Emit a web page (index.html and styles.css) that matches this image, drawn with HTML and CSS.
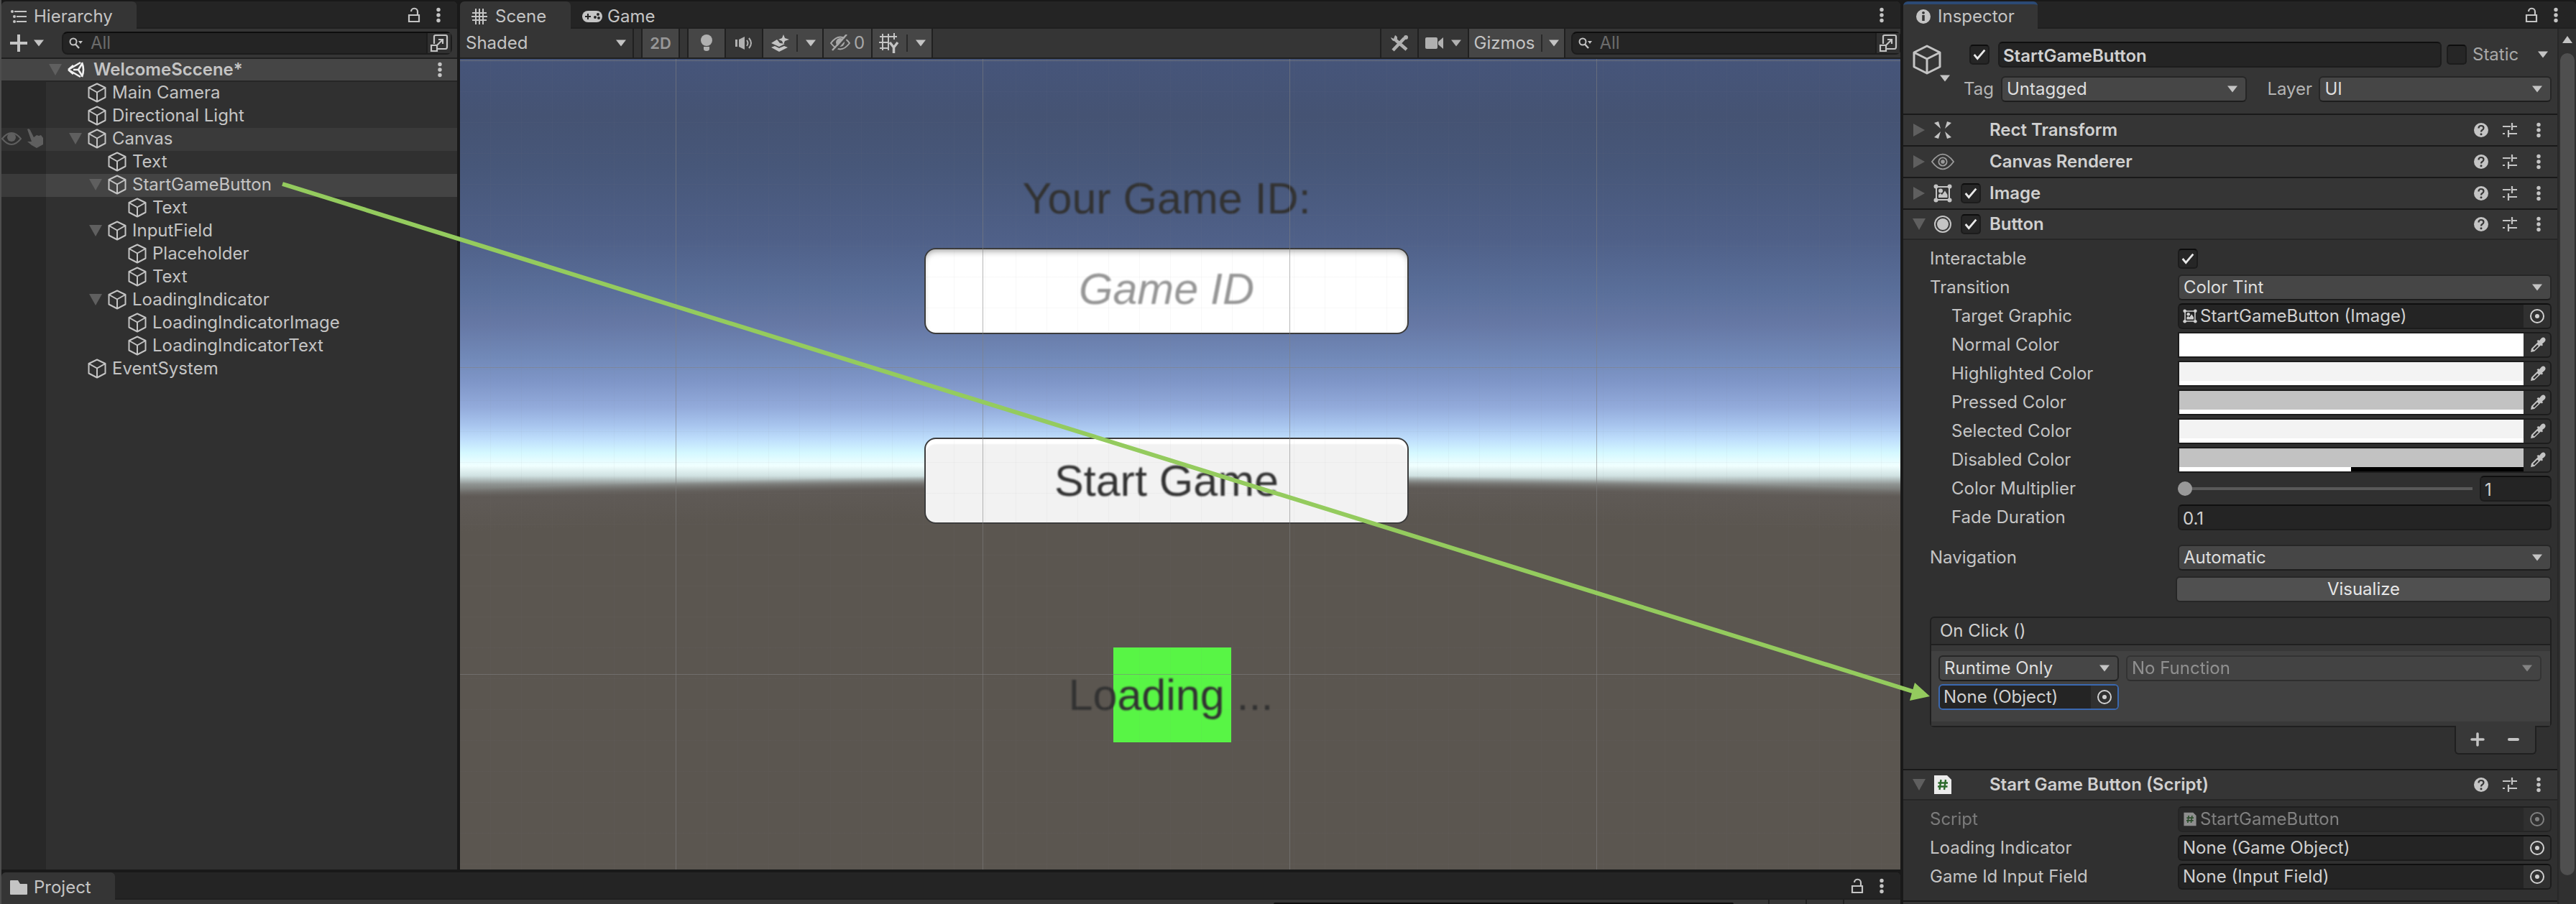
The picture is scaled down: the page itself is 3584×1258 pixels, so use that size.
FILE: index.html
```html
<!DOCTYPE html>
<html lang="en">
<head>
<meta charset="utf-8">
<title>WelcomeSccene - Editor</title>
<link rel="stylesheet" href="styles.css">
</head>
<body>
<svg class="defs" aria-hidden="true">
  <symbol id="cube" viewBox="0 0 26 28"><path d="M13 1.500 L24.500 7 V20.500 L13 26.500 L1.500 20.500 V7 Z M1.500 7 L13 13.500 L24.500 7 M13 13.500 V26.500" fill="none" stroke="currentColor" stroke-width="2" stroke-linejoin="round"/></symbol>
  <symbol id="bigcube" viewBox="0 0 40 42"><path d="M20 2 L38 11 V31 L20 40 L2 31 V11 Z M2 11 L20 20 L38 11 M20 20 V40" fill="none" stroke="currentColor" stroke-width="3" stroke-linejoin="round"/></symbol>
  <symbol id="down" viewBox="0 0 16 10"><path d="M1 0.500 H15 L8 9.500 Z" fill="currentColor"/></symbol>
  <symbol id="fold" viewBox="0 0 18 16"><path d="M0 0 H18 L9 16 Z" fill="currentColor"/></symbol>
  <symbol id="right" viewBox="0 0 16 18"><path d="M0 0 V18 L16 9 Z" fill="currentColor"/></symbol>
  <symbol id="dots" viewBox="0 0 6 22"><circle cx="3" cy="3.500" r="2.700" fill="currentColor"/><circle cx="3" cy="11" r="2.700" fill="currentColor"/><circle cx="3" cy="18.500" r="2.700" fill="currentColor"/></symbol>
  <symbol id="lock" viewBox="0 0 18 22"><path d="M2 11 H16 V20 H2 Z M14 11 V6.500 A4.500 4.500 0 0 0 5 6" fill="none" stroke="currentColor" stroke-width="2.200"/></symbol>
  <symbol id="find" viewBox="0 0 20 16"><circle cx="6" cy="6" r="4.500" fill="none" stroke="currentColor" stroke-width="2"/><path d="M9 9.500 L14 15" stroke="currentColor" stroke-width="2.400"/><path d="M13 5 H19 L16 9 Z" fill="currentColor"/></symbol>
  <symbol id="popout" viewBox="0 0 26 26"><path d="M6 14 V4 Q6 2 8 2 H22 Q24 2 24 4 V18 Q24 21 22 21 H11 M2 16 H10 V24 H2 Z M10 16 L18 8 M12 8 H18 V14" fill="none" stroke="currentColor" stroke-width="2.200"/></symbol>
  <symbol id="help" viewBox="0 0 22 22"><circle cx="11" cy="11" r="10" fill="currentColor"/><path d="M7.500 8.500 Q7.500 5 11 5 Q14.500 5 14.500 8 Q14.500 10 12.500 11 Q11 12 11 13.500" fill="none" stroke="#353535" stroke-width="2.200"/><circle cx="11" cy="16.800" r="1.500" fill="#353535"/></symbol>
  <symbol id="preset" viewBox="0 0 22 22"><path d="M1 6 H12 M14 1 V11 M14 6 H21 M1 16 H4 M9 11 V21 M9 16 H21" stroke="currentColor" stroke-width="2.200" fill="none"/></symbol>
  <symbol id="target" viewBox="0 0 22 22"><circle cx="11" cy="11" r="9" fill="none" stroke="currentColor" stroke-width="2"/><circle cx="11" cy="11" r="3" fill="currentColor"/></symbol>
  <symbol id="picker" viewBox="0 0 22 22"><path d="M1 21 L2 16 L11 7 L9.500 5.500 L11.500 4 L13 5 L16 1.500 Q19 -0.500 21 2 Q22.500 4.500 20 7 L17 9.500 L18 11 L16.500 12.500 L15 11.500 L6 20 Z" fill="currentColor"/><path d="M5 17.500 L11 11.500" stroke="#2a2a2a" stroke-width="2.400"/></symbol>
  <symbol id="image" viewBox="0 0 26 26"><path d="M4 4 H22 V22 H4 Z" fill="none" stroke="currentColor" stroke-width="2"/><g fill="currentColor"><circle cx="3.500" cy="3.500" r="3"/><circle cx="22.500" cy="3.500" r="3"/><circle cx="3.500" cy="22.500" r="3"/><circle cx="22.500" cy="22.500" r="3"/><circle cx="10" cy="9.500" r="3"/><path d="M7 19 V15 L9.500 13 L12 15 L16 9.500 L19.500 15 V19 Z"/></g></symbol>
  <symbol id="script" viewBox="0 0 26 28"><path d="M1 1 H19 L25 7 V27 H1 Z" fill="#ececec"/><path d="M10.500 7 L8.500 21 M17 7 L15 21 M6.500 11.500 H20 M6 16.500 H19.500" stroke="#2c6a2c" stroke-width="2.400" fill="none"/></symbol>
</svg>

<section class="panel hierarchy" aria-label="Hierarchy">
  <header class="tabs">
    <h2 class="tab tab-hier"><svg width="22" height="18" viewBox="0 0 22 18"><path d="M5 2 H22 M8 9 H22 M8 16 H22" stroke="currentColor" stroke-width="2.200"/><circle cx="2" cy="2" r="2" fill="currentColor"/><circle cx="5" cy="9" r="2" fill="currentColor"/><circle cx="5" cy="16" r="2" fill="currentColor"/></svg>Hierarchy</h2>
    <span class="tab-tools"><svg width="18" height="22"><use href="#lock"/></svg><svg width="6" height="22"><use href="#dots"/></svg></span>
  </header>
  <div class="toolbar hier-bar">
    <button class="plain add" aria-label="Create"><svg width="24" height="24" viewBox="0 0 24 24"><path d="M12 0 V24 M0 12 H24" stroke="currentColor" stroke-width="4"/></svg><svg width="16" height="10"><use href="#down"/></svg></button>
    <label class="search"><svg width="20" height="16"><use href="#find"/></svg><input type="text" placeholder="All" aria-label="Search hierarchy"><span class="pop"><svg width="26" height="26"><use href="#popout"/></svg></span></label>
  </div>
  <div class="scene-row"><svg class="fold" width="18" height="16"><use href="#fold"/></svg><svg class="white" width="24" height="24" viewBox="0 0 24 24"><path d="M1 12 L18 2 M1 12 L18 22 M8 12 H15 M15 12 L20 4 M15 12 L20 20 M20 2 Q24 12 20 22 M1 12 L8 6 M1 12 L8 18" stroke="currentColor" stroke-width="2.600" fill="none"/></svg><strong>WelcomeSccene*</strong><svg class="end" width="6" height="22"><use href="#dots"/></svg></div>
  <ul class="tree">
    <li class="l1"><svg width="26" height="28"><use href="#cube"/></svg>Main Camera</li>
    <li class="l1"><svg width="26" height="28"><use href="#cube"/></svg>Directional Light</li>
    <li class="l1 hover"><span class="gutter"><svg width="28" height="20" viewBox="0 0 28 20"><path d="M1 10 Q14 -6 27 10 Q14 26 1 10 Z" fill="none" stroke="currentColor" stroke-width="2"/><circle cx="14" cy="8" r="6" fill="currentColor"/></svg><svg width="24" height="28" viewBox="0 0 24 28"><path d="M1 1 Q3 -1 5 2 L10 12 L14 9 L17 10 L20 9 L23 13 V22 L14 27 L7 23 L1 18 L7 18 Z" fill="currentColor"/></svg></span><svg class="fold" width="18" height="16"><use href="#fold"/></svg><svg width="26" height="28"><use href="#cube"/></svg>Canvas</li>
    <li class="l2"><svg width="26" height="28"><use href="#cube"/></svg>Text</li>
    <li class="l2 selected"><svg class="fold" width="18" height="16"><use href="#fold"/></svg><svg width="26" height="28"><use href="#cube"/></svg>StartGameButton</li>
    <li class="l3"><svg width="26" height="28"><use href="#cube"/></svg>Text</li>
    <li class="l2"><svg class="fold" width="18" height="16"><use href="#fold"/></svg><svg width="26" height="28"><use href="#cube"/></svg>InputField</li>
    <li class="l3"><svg width="26" height="28"><use href="#cube"/></svg>Placeholder</li>
    <li class="l3"><svg width="26" height="28"><use href="#cube"/></svg>Text</li>
    <li class="l2"><svg class="fold" width="18" height="16"><use href="#fold"/></svg><svg width="26" height="28"><use href="#cube"/></svg>LoadingIndicator</li>
    <li class="l3"><svg width="26" height="28"><use href="#cube"/></svg>LoadingIndicatorImage</li>
    <li class="l3"><svg width="26" height="28"><use href="#cube"/></svg>LoadingIndicatorText</li>
    <li class="l1"><svg width="26" height="28"><use href="#cube"/></svg>EventSystem</li>
  </ul>
</section>

<main class="panel scene">
  <header class="tabs">
    <h2 class="tab tab-scene"><svg width="22" height="22" viewBox="0 0 22 22"><path d="M6 0 V22 M11 0 V22 M16 0 V22 M1 6 H21 M0 11 H22 M1 16 H21" stroke="currentColor" stroke-width="2"/></svg>Scene</h2>
    <h2 class="tab idle"><svg width="28" height="16" viewBox="0 0 28 16"><rect width="28" height="16" rx="8" fill="currentColor"/><path d="M8 4 V12 M4 8 H12" stroke="#242424" stroke-width="2"/><circle cx="18" cy="9" r="2" fill="#242424"/><circle cx="22" cy="5" r="2" fill="#242424"/><circle cx="23" cy="10" r="2" fill="#242424"/></svg>Game</h2>
    <span class="tab-tools"><svg width="6" height="22"><use href="#dots"/></svg></span>
  </header>
  <div class="toolbar scene-bar">
    <button class="cell shading">Shaded<svg width="16" height="10"><use href="#down"/></svg></button>
    <span class="cell spacer"></span>
    <button class="cell on two-d">2D</button>
    <span class="cell spacer"></span>
    <button class="cell on icon" aria-label="Lighting"><svg width="16" height="24" viewBox="0 0 16 24"><circle cx="8" cy="8" r="8" fill="currentColor"/><path d="M4 17 H12 V20 Q12 23 8 23 Q4 23 4 20 Z" fill="currentColor"/></svg></button>
    <button class="cell icon" aria-label="Audio"><svg width="26" height="20" viewBox="0 0 26 20"><path d="M1 5 H4 V15 H1 Z M6 5 L14 1 V19 L6 15 Z" fill="currentColor"/><path d="M17 6 Q20 10 17 14 M20 3 Q26 10 20 17" fill="none" stroke="currentColor" stroke-width="2"/></svg></button>
    <button class="cell on wide" aria-label="Effects"><svg width="26" height="24" viewBox="0 0 26 24"><path d="M18 0 L20 5 L26 7 L20 9 L18 14 L16 9 L11 7 L16 5 Z M1 12 L9 7 L13 12 L20 13 L12 17 Z M1 18 L6 16 L12 19 L19 16 L24 18 L12 24 Z" fill="currentColor"/></svg><i></i><svg width="16" height="10"><use href="#down"/></svg></button>
    <button class="cell on hidden-count" aria-label="Hidden objects"><svg width="28" height="24" viewBox="0 0 28 24"><path d="M1 12 Q14 -5 27 12 Q14 29 1 12 Z" fill="none" stroke="currentColor" stroke-width="2"/><circle cx="14" cy="11" r="6" fill="currentColor"/><path d="M5 24 L25 2" stroke="#464646" stroke-width="3"/><path d="M3 22 L23 0" stroke="currentColor" stroke-width="2.500"/></svg>0</button>
    <button class="cell on wide" aria-label="Grid"><svg width="28" height="28" viewBox="0 0 28 28"><path d="M5 1 V24 M13 1 V24 M21 0 V9 M1 5 H25 M0 13 H14 M1 21 H13" stroke="currentColor" stroke-width="2"/><path d="M15 13 L20.500 20 L26 13 M20.500 20 V28" stroke="currentColor" stroke-width="3.500" fill="none"/></svg><i></i><svg width="16" height="10"><use href="#down"/></svg></button>
    <span class="cell grow"></span>
    <button class="cell icon" aria-label="Tools"><svg width="26" height="24" viewBox="0 0 26 24"><path d="M8 8 L23 21 M20 5 L4 22" stroke="currentColor" stroke-width="4.500"/><path d="M1 4 L5 6 L7 1 Q12 3 9 9 Q3 11 1 4 Z" fill="currentColor"/><circle cx="22" cy="4" r="3" fill="currentColor"/></svg></button>
    <button class="cell cam" aria-label="Camera"><svg width="26" height="16" viewBox="0 0 26 16"><rect width="17" height="16" rx="2" fill="currentColor"/><path d="M18 6 L25 0 V16 L18 10 Z" fill="currentColor"/></svg><svg width="16" height="10"><use href="#down"/></svg></button>
    <button class="cell on gizmos">Gizmos<i></i><svg width="16" height="10"><use href="#down"/></svg></button>
    <div class="cell search-cell"><label class="search"><svg width="20" height="16"><use href="#find"/></svg><input type="text" placeholder="All" aria-label="Search scene"><span class="pop"><svg width="26" height="26"><use href="#popout"/></svg></span></label></div>
  </div>
  <div class="viewport">
    <div class="ground"></div>
    <label class="ui game-label" for="gid">Your Game ID:</label>
    <input class="ui game-input" id="gid" type="text" placeholder="Game ID">
    <button class="ui game-start"><span>Start Game</span></button>
    <div class="ui game-square"></div>
    <p class="ui game-loading">Loading ...</p>
    <div class="lines"></div>
  </div>
</main>

<aside class="panel inspector" aria-label="Inspector">
  <header class="tabs">
    <h2 class="tab tab-insp"><svg width="20" height="20" viewBox="0 0 20 20"><circle cx="10" cy="10" r="10" fill="currentColor"/><path d="M10 8 V16" stroke="#353535" stroke-width="3.500"/><circle cx="10" cy="4.800" r="1.900" fill="#353535"/></svg>Inspector</h2>
    <span class="tab-tools"><svg width="18" height="22"><use href="#lock"/></svg><svg width="6" height="22"><use href="#dots"/></svg></span>
  </header>
  <div class="insp-body">
    <div class="insp-content">
      <div class="object">
        <span class="object-icon"><svg width="40" height="42"><use href="#bigcube"/></svg><svg width="16" height="10"><use href="#down"/></svg></span>
        <div class="object-fields">
          <div class="object-row">
            <input type="checkbox" checked aria-label="Active">
            <input class="field name" type="text" value="StartGameButton" aria-label="Name">
            <label class="static"><input type="checkbox">Static</label>
            <svg class="static-caret" width="16" height="10"><use href="#down"/></svg>
          </div>
          <div class="object-row second">
            <label for="tag">Tag</label>
            <span class="select tag"><select id="tag"><option>Untagged</option></select><svg width="16" height="10"><use href="#down"/></svg></span>
            <label class="layer-label" for="layer">Layer</label>
            <span class="select layer"><select id="layer"><option>UI</option></select><svg width="16" height="10"><use href="#down"/></svg></span>
          </div>
        </div>
      </div>

      <div class="comp"><svg class="fold" width="16" height="18"><use href="#right"/></svg><svg width="26" height="24" viewBox="0 0 26 24"><path d="M1 2 L7 0 L10 10 Z M25 2 L19 0 L16 10 Z M1 22 L7 24 L10 14 Z M25 22 L19 24 L16 14 Z" fill="currentColor"/></svg><span></span><h3>Rect Transform</h3><svg width="22" height="22"><use href="#help"/></svg><svg width="22" height="22"><use href="#preset"/></svg><svg width="6" height="22"><use href="#dots"/></svg></div>
      <div class="comp"><svg class="fold" width="16" height="18"><use href="#right"/></svg><svg class="eye" width="32" height="24" viewBox="0 0 34 24"><path d="M1 12 Q9 1 17 1 Q25 1 33 12 Q25 23 17 23 Q9 23 1 12 Z" fill="none" stroke="currentColor" stroke-width="2"/><circle cx="17" cy="12" r="6" fill="none" stroke="currentColor" stroke-width="2"/><circle cx="17" cy="12" r="3" fill="currentColor"/></svg><span></span><h3>Canvas Renderer</h3><svg width="22" height="22"><use href="#help"/></svg><svg width="22" height="22"><use href="#preset"/></svg><svg width="6" height="22"><use href="#dots"/></svg></div>
      <div class="comp"><svg class="fold" width="16" height="18"><use href="#right"/></svg><svg width="26" height="26"><use href="#image"/></svg><input type="checkbox" checked aria-label="Image enabled"><h3>Image</h3><svg width="22" height="22"><use href="#help"/></svg><svg width="22" height="22"><use href="#preset"/></svg><svg width="6" height="22"><use href="#dots"/></svg></div>
      <div class="comp open"><svg class="fold" width="18" height="16"><use href="#fold"/></svg><svg width="26" height="24" viewBox="0 0 26 24"><circle cx="13" cy="12" r="11" fill="none" stroke="currentColor" stroke-width="2"/><circle cx="13" cy="12" r="8" fill="currentColor"/></svg><input type="checkbox" checked aria-label="Button enabled"><h3>Button</h3><svg width="22" height="22"><use href="#help"/></svg><svg width="22" height="22"><use href="#preset"/></svg><svg width="6" height="22"><use href="#dots"/></svg></div>

      <div class="props">
        <div class="prop"><label for="inter">Interactable</label><input id="inter" type="checkbox" checked></div>
        <div class="prop"><label for="trans">Transition</label><span class="select"><select id="trans"><option>Color Tint</option></select><svg width="16" height="10"><use href="#down"/></svg></span></div>
        <div class="prop sub"><span>Target Graphic</span><button class="field object-field"><svg width="20" height="20"><use href="#image"/></svg>StartGameButton (Image)<b><svg width="22" height="22"><use href="#target"/></svg></b></button></div>
        <div class="prop sub"><span>Normal Color</span><button class="swatch" aria-label="Normal Color"><span class="normal"></span><svg width="22" height="22"><use href="#picker"/></svg></button></div>
        <div class="prop sub"><span>Highlighted Color</span><button class="swatch" aria-label="Highlighted Color"><span class="light"></span><svg width="22" height="22"><use href="#picker"/></svg></button></div>
        <div class="prop sub"><span>Pressed Color</span><button class="swatch" aria-label="Pressed Color"><span class="gray"></span><svg width="22" height="22"><use href="#picker"/></svg></button></div>
        <div class="prop sub"><span>Selected Color</span><button class="swatch" aria-label="Selected Color"><span class="light"></span><svg width="22" height="22"><use href="#picker"/></svg></button></div>
        <div class="prop sub"><span>Disabled Color</span><button class="swatch" aria-label="Disabled Color"><span class="gray half"></span><svg width="22" height="22"><use href="#picker"/></svg></button></div>
        <div class="prop sub"><label for="mult">Color Multiplier</label><div class="slider"><input id="mult" type="range" min="1" max="5" value="1"><input class="field" type="text" value="1" aria-label="Color Multiplier value"></div></div>
        <div class="prop sub"><label for="fade">Fade Duration</label><input class="field" id="fade" type="text" value="0.1"></div>
        <div class="prop nav"><label for="nav">Navigation</label><span class="select"><select id="nav"><option>Automatic</option></select><svg width="16" height="10"><use href="#down"/></svg></span></div>
        <div class="prop vis"><span></span><button class="visualize">Visualize</button></div>
        <div class="event">
          <h4>On Click ()</h4>
          <div class="event-list"><div class="event-item">
            <span class="select"><select aria-label="Call state"><option>Runtime Only</option></select><svg width="16" height="10"><use href="#down"/></svg></span>
            <span class="select off"><select aria-label="Function" disabled><option>No Function</option></select><svg width="16" height="10"><use href="#down"/></svg></span>
            <button class="field object-field focus">None (Object)<b><svg width="22" height="22"><use href="#target"/></svg></b></button>
          </div></div>
        </div>
        <div class="event-foot"><button class="plain" aria-label="Add"><svg width="20" height="20" viewBox="0 0 20 20"><path d="M10 2 V18 M2 10 H18" stroke="currentColor" stroke-width="3.500" stroke-linecap="round"/></svg></button><button class="plain" aria-label="Remove"><svg width="20" height="20" viewBox="0 0 20 20"><path d="M4 10 H16" stroke="currentColor" stroke-width="4" stroke-linecap="round"/></svg></button></div>
      </div>

      <div class="comp open"><svg class="fold" width="18" height="16"><use href="#fold"/></svg><svg width="26" height="28"><use href="#script"/></svg><span></span><h3>Start Game Button (Script)</h3><svg width="22" height="22"><use href="#help"/></svg><svg width="22" height="22"><use href="#preset"/></svg><svg width="6" height="22"><use href="#dots"/></svg></div>
      <div class="props last">
        <div class="prop faded"><span>Script</span><button class="field object-field" disabled><svg width="20" height="20"><use href="#script"/></svg>StartGameButton<b><svg width="22" height="22"><use href="#target"/></svg></b></button></div>
        <div class="prop"><span>Loading Indicator</span><button class="field object-field">None (Game Object)<b><svg width="22" height="22"><use href="#target"/></svg></b></button></div>
        <div class="prop"><span>Game Id Input Field</span><button class="field object-field">None (Input Field)<b><svg width="22" height="22"><use href="#target"/></svg></b></button></div>
      </div>
      <div class="rest"></div>
    </div>
    <div class="scroll"><svg width="14" height="10" viewBox="0 0 14 10"><path d="M0 10 H14 L7 0 Z" fill="currentColor"/></svg><span></span></div>
  </div>
</aside>

<footer class="panel project">
  <header class="tabs">
    <h2 class="tab tab-proj"><svg width="24" height="20" viewBox="0 0 24 20"><path d="M0 1 Q0 0 1 0 H11 L14 5 H23 Q24 5 24 6 V19 Q24 20 23 20 H1 Q0 20 0 19 Z" fill="currentColor"/></svg>Project</h2>
    <span class="tab-tools"><svg width="18" height="22"><use href="#lock"/></svg><svg width="6" height="22"><use href="#dots"/></svg></span>
  </header>
  <div class="project-bar"><span class="project-search"></span><i></i><i></i><i></i></div>
</footer>

<svg class="arrow" aria-hidden="true"><path d="M393 256 L2664 963" stroke="#94cb5e" stroke-width="6"/><path d="M2664 950 L2685 969 L2657 975 Z" fill="#94cb5e"/></svg>
</body>
</html>
```
FILE: styles.css
```css
* { box-sizing: border-box; }

body {
  margin: 0;
  min-height: 100vh;
  padding-top: 2px;
  border-left: 2px solid #4e4e4e;
  background: #191919;
  color: #c4c4c4;
  font: 24px/32px Inter, "Liberation Sans", sans-serif;
  display: grid;
  grid-template-columns: 634px minmax(0, 1fr) 936px;
  grid-template-rows: minmax(0, 1fr) 44px;
  gap: 4px;
  position: relative;
}

h2, h3, h4, p, ul { margin: 0; padding: 0; font: inherit; }
input, select, button { font: inherit; color: inherit; margin: 0; padding: 0; border: 0; background: none; border-radius: 0; appearance: none; min-width: 0; outline: 0; text-align: left; }
svg { display: block; flex: none; }

.defs { position: absolute; width: 0; height: 0; }
.arrow { position: absolute; inset: 0 auto auto -2px; width: calc(100% + 2px); height: 100%; pointer-events: none; }

.panel { display: flex; flex-direction: column; min-width: 0; min-height: 0; background: #353535; border-radius: 6px 6px 0 0; overflow: hidden; }
.inspector { grid-row: 1 / span 2; grid-column: 3; }
.project { grid-column: 1 / span 2; }

.tabs { display: flex; height: 38px; flex: none; background: #242424; box-shadow: inset 0 -2px #202020; }
.tab { display: flex; align-items: center; padding-top: 4px; background: #353535; border-radius: 6px 6px 0 0; }
.tab-hier { width: 188px; padding-left: 13px; gap: 10px; }
.tab-scene { width: 154px; padding-left: 16px; gap: 11px; }
.idle { padding-left: 16px; gap: 7px; background: none; }
.tab-insp { width: 187px; padding-left: 18px; gap: 10px; border-top: 4px solid #2b4a75; padding-top: 0; }
.tab-proj { width: 158px; padding-left: 12px; gap: 9px; }
.tab-tools { display: flex; align-items: center; gap: 22px; margin-left: auto; padding-right: 23px; }
.inspector .tab-tools { padding-right: 25px; }

.toolbar { display: flex; height: 42px; flex: none; border-bottom: 2px solid #202020; }
.plain { display: flex; align-items: center; justify-content: center; }
.hier-bar { padding: 4px 7px 4px 12px; justify-content: space-between; }
.add { gap: 8px; }
.search { display: flex; align-items: center; width: 543px; height: 32px; padding-left: 8px; gap: 10px; background: #242424; border: 2px solid #1c1c1c; border-top-color: #0d0d0d; border-radius: 8px; }
.search input { flex: 1; height: 28px; }
::placeholder { color: #6b6b6b; opacity: 1; }
.pop { display: grid; place-items: center; width: 34px; height: 28px; background: #303030; border-left: 2px solid #1c1c1c; }

.scene-row { display: flex; align-items: center; height: 32px; flex: none; padding: 0 21px 0 66px; background: #454545; border-bottom: 2px solid #262626; }
.scene-row strong { font-weight: 600; margin-left: 12px; }
.scene-row .white { margin-left: 8px; color: #f0f0f0; }
.scene-row .end { margin-left: auto; }
.fold { color: #5f5f5f; }
.tree { flex: 1; list-style: none; background: linear-gradient(90deg, #282828 62px, #303030 62px); }
.tree li { display: flex; align-items: center; height: 32px; padding-bottom: 2px; gap: 8px; }
.tree .l1 { padding-left: 120px; }
.tree .l2 { padding-left: 148px; }
.tree .l3 { padding-left: 176px; }
.tree .fold { margin-left: -26px; }
.tree .hover { background: linear-gradient(90deg, #303030 62px, #3a3a3a 62px); padding-left: 0; }
.tree .hover .fold { margin-left: 26px; }
.tree .selected { background: linear-gradient(90deg, #3a3a3a 62px, #444 62px); }
.gutter { display: flex; align-items: center; width: 60px; gap: 7px; color: #5f5f5f; }

.scene-bar { background: #202020; gap: 2px; }
.cell { display: flex; align-items: center; justify-content: center; height: 40px; background: #353535; }
.cell i { width: 2px; height: 24px; background: #292929; }
.on { background: #464646; }
.shading { width: 240px; padding: 0 8px; justify-content: space-between; }
.spacer { width: 10px; }
.grow { flex: 1; }
.icon, .two-d { width: 50px; color: #b0b0b0; }
.two-d { font-weight: 600; color: #989898; font-size: 22px; }
.wide { width: 82px; gap: 10px; padding-left: 2px; }
.hidden-count { width: 66px; gap: 5px; color: #a8a8a8; }
.cam { width: 68px; gap: 9px; color: #b0b0b0; }
.gizmos { width: 132px; gap: 8px; }
.search-cell { width: 466px; padding: 0 6px 0 14px; }
.search-cell .search { flex: 1; }

.viewport {
  flex: 1; min-height: 1120px; position: relative; overflow: hidden;
  background: linear-gradient(#46557a, #455373 80px, #475779 150px, #4f6088 250px, #5a6f9a 325px, #6678a5 370px, #7189b8 415px, #7f96c8 450px, #93abdb 485px, #a8c5ee 510px, #bfdffc 530px, #d4f8ff 548px, #f0ffff 566px, #d0e2e2 580px, #8f9492 592px, #5e5955 610px);
}
.ground { position: absolute; inset: 0; background: radial-gradient(ellipse 12000px 6000px at 50% 6578px, #5b5650 0, #5b5650 99%, #5f5a56 99.700%, #5f5a5600 100%); }
.ui { position: absolute; left: calc(50% - 19px); transform: translateX(-50%); font: 61px/72px "Liberation Sans", Arial, sans-serif; color: #323232; white-space: pre; }
.game-label { top: 158px; filter: blur(1px); }
.game-input, .game-start { width: 674px; height: 120px; border: 2px solid #3c3c3c; border-radius: 16px; text-align: center; }
.game-input { top: 263px; padding-bottom: 6px; background: #fff; box-shadow: inset 0 6px 10px -4px #999; font-style: italic; }
.game-input::placeholder { color: #969696; filter: blur(1px); }
.game-start { top: 527px; background: #f2f2f2; box-shadow: inset 0 8px 2px -1px #fff; }
.game-start span { filter: blur(1px); }
.game-square { left: calc(50% - 11px); top: 819px; width: 164px; height: 132px; background: #58f545; }
.game-loading { left: calc(50% - 13px); top: 849px; filter: blur(1px); }
.lines {
  position: absolute; inset: 0; pointer-events: none;
  background:
    linear-gradient(90deg, #80808090 1px, #0000 1px) 300px 0 / 427px 100%,
    linear-gradient(#80808090 1px, #0000 1px) 0 2px / 100% 427px,
    linear-gradient(90deg, #8080800e 1px, #0000 1px) 300px 0 / 43px 100%,
    linear-gradient(#8080800e 1px, #0000 1px) 0 2px / 100% 43px;
}

.insp-body { display: flex; flex: 1; min-height: 0; }
.insp-content { flex: 1; display: flex; flex-direction: column; min-width: 0; }
.scroll { width: 26px; border-left: 2px solid #282828; background: #303030; display: flex; flex-direction: column; align-items: center; padding: 10px 0 40px; gap: 14px; }
.scroll span { width: 20px; flex: 1; border-radius: 10px; background: #4f4f4f; }

.object { display: flex; height: 118px; flex: none; padding: 18px 8px 0 13px; }
.object-icon { display: grid; grid-template-columns: 40px 16px; align-content: start; padding-top: 4px; width: 79px; }
.object-icon svg + svg { grid-area: 2 / 2; margin-left: -3px; }
.object-fields { flex: 1; min-width: 0; display: flex; flex-direction: column; gap: 12px; }
.object-row { display: flex; align-items: center; height: 36px; }
.object-row > .name { flex: 1; margin: 0 7px 0 12px; font-weight: 600; }
.static { display: flex; align-items: center; gap: 8px; color: #a8a8a8; width: 112px; }
.static-caret { margin: 0 4px 0 14px; }
.second { color: #b4b4b4; }
.second label { width: 52px; flex: none; margin-left: -8px; }
.second .layer-label { width: 72px; margin-left: 28px; }
.tag { flex: 342; }
.layer { flex: 323; }

input[type=checkbox] { width: 28px; height: 28px; flex: none; background: #262626; border: 2px solid #1c1c1c; border-top-color: #0d0d0d; border-radius: 5px; }
input[type=checkbox]:checked { background: #262626 url("data:image/svg+xml,%3Csvg xmlns='http://www.w3.org/2000/svg' viewBox='0 0 24 24'%3E%3Cpath d='M4 12 L9 18 L20 5' fill='none' stroke='%23e8e8e8' stroke-width='3'/%3E%3C/svg%3E") center / 22px no-repeat; }

.field { display: block; height: 36px; width: 100%; padding: 2px 5px 0; background: #242424; border: 2px solid #1c1c1c; border-top-color: #0f0f0f; border-radius: 6px; color: #d0d0d0; }
.select { display: grid; align-items: center; min-width: 0; height: 36px; background: #464646; border: 2px solid #262626; border-bottom-color: #1d1d1d; border-radius: 6px; color: #dedede; }
.select select { grid-area: 1 / 1; width: 100%; height: 32px; padding: 0 6px 2px; }
.select svg { grid-area: 1 / 1; justify-self: end; margin-right: 10px; color: #c4c4c4; pointer-events: none; }

.comp { display: grid; grid-template-columns: 16px 26px 28px 1fr 28px 28px 28px; column-gap: 12px; align-items: center; justify-items: center; height: 44px; flex: none; padding: 0 12px 0 14px; border-top: 2px solid #191919; }
.comp h3 { justify-self: start; font-weight: 600; color: #d0d0d0; }
.open { border-bottom: 2px solid #262626; }
.eye { color: #9a9a9a; }

.props { background: #303030; padding: 8px 8px 20px 37px; display: flex; flex-direction: column; gap: 4px; }
.last { padding-bottom: 15px; }
.prop { display: grid; grid-template-columns: 345px minmax(0, 1fr); align-items: center; height: 36px; flex: none; }
.sub > :first-child { padding-left: 30px; }
.object-field { display: flex; align-items: center; gap: 4px; padding: 0 0 0 5px; overflow: hidden; }
.object-field b { display: grid; place-items: center; width: 37px; height: 32px; margin-left: auto; background: #303030; }
.swatch { display: flex; align-items: center; height: 36px; border: 2px solid #1c1c1c; border-radius: 0 6px 6px 0; padding-right: 6px; gap: 9px; }
.swatch span { flex: 1; height: 32px; border-bottom: 6px solid #fff; }
.normal { background: #fff; }
.light { background: #f3f3f3; }
.gray { background: #c2c2c2; }
.swatch .half { border-image: linear-gradient(90deg, #fff 50%, #000 50%) 6; }
.slider { display: grid; grid-template-columns: minmax(0, 1fr) 100px; gap: 10px; align-items: center; }
input[type=range] { width: 100%; height: 20px; background: linear-gradient(#5a5a5a, #5a5a5a) center / 100% 4px no-repeat; }
input[type=range]::-webkit-slider-thumb { appearance: none; width: 20px; height: 20px; border-radius: 50%; background: #999; }
.nav { margin-top: 16px; }
.vis { margin-top: 4px; grid-template-columns: 342px minmax(0, 1fr); }
.visualize { height: 36px; text-align: center; background: #505050; border: 2px solid #262626; border-radius: 6px; color: #e6e6e6; padding-bottom: 2px; }

.event { margin-top: 16px; border: 2px solid #1f1f1f; border-radius: 6px; }
.event h4 { height: 38px; padding: 2px 12px; border-bottom: 2px solid #1f1f1f; color: #d0d0d0; }
.event-list { background: #383838; padding: 8px 0 6px; }
.event-item { display: grid; grid-template-columns: 251px minmax(0, 1fr); gap: 4px 10px; height: 98px; padding: 6px 12px 6px 10px; align-content: start; background: #414141; }
.off { opacity: .5; }
.off select { opacity: 1; }
.focus { border-color: #3a68b0; }
.event-foot { display: flex; justify-content: center; gap: 30px; align-self: flex-end; width: 114px; height: 40px; margin: -6px 21px 0 0; background: #383838; border: 2px solid #1f1f1f; border-top: 0; border-radius: 0 0 6px 6px; position: relative; }
.faded { opacity: .5; }
.rest { flex: 1; border-top: 2px solid #191919; background: #353535; }

.project-bar { display: flex; flex: 1; gap: 50px; padding-right: 78px; }
.project-bar i { width: 2px; background: #202020; }
.project-search { width: 640px; height: 2px; margin: 4px -2px 0 auto; background: #0d0d0d; border-radius: 6px 6px 0 0; }
```
